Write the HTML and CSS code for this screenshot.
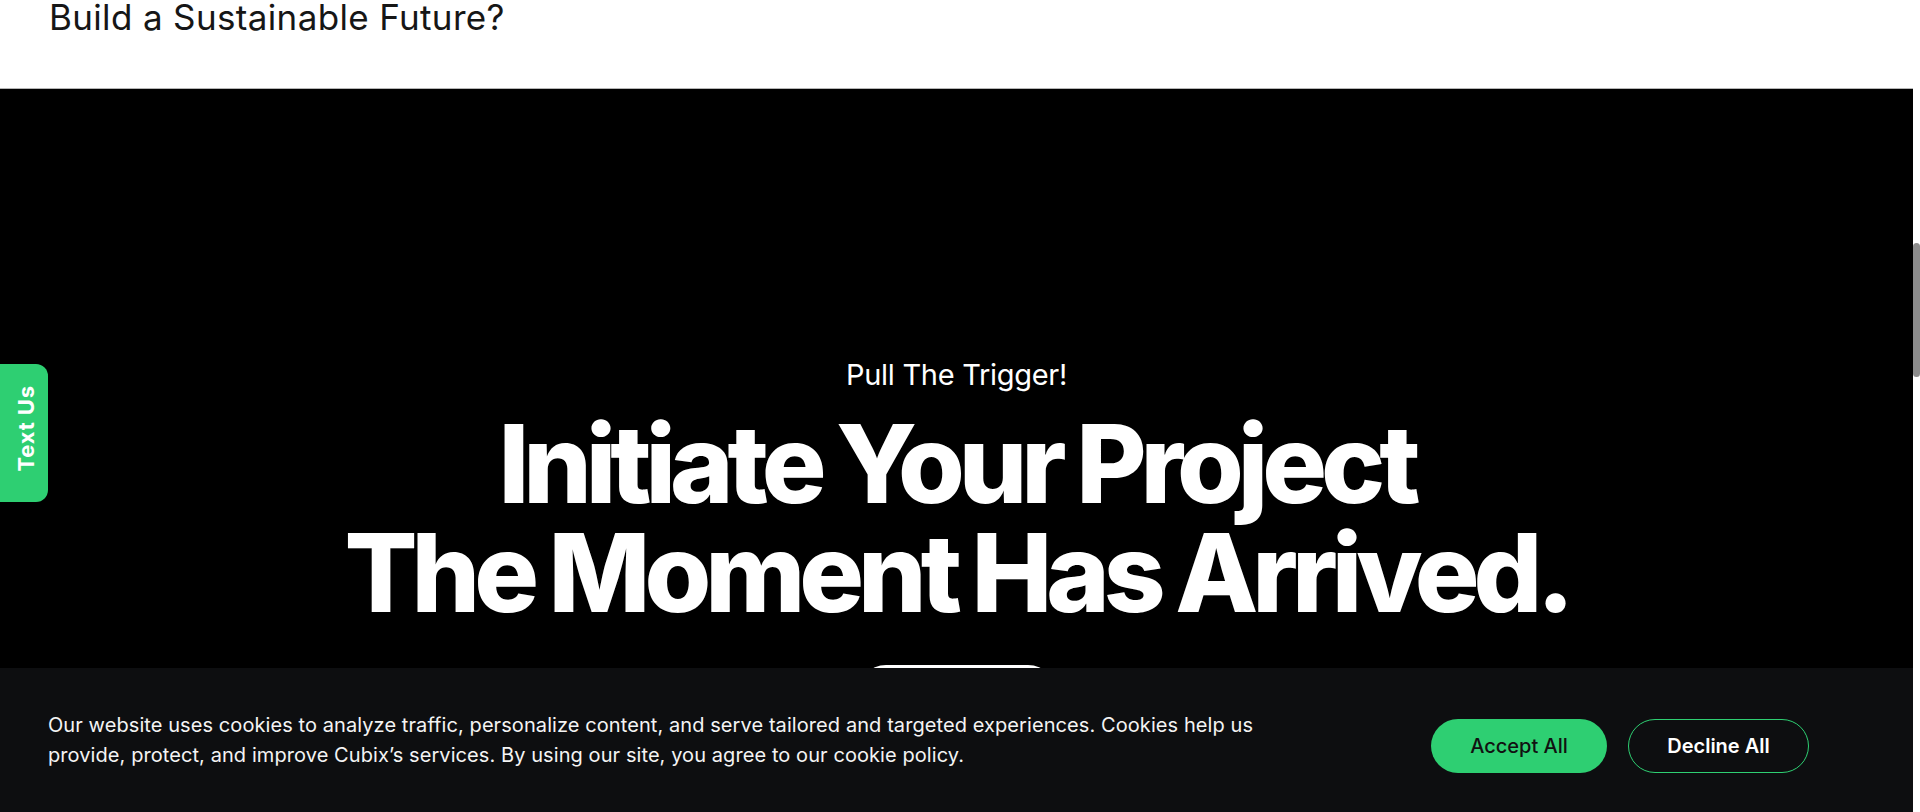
FILE: index.html
```html
<!DOCTYPE html>
<html lang="en">
<head>
<meta charset="utf-8">
<title>Initiate Your Project</title>
<link rel="stylesheet" href="styles.css">
</head>
<body>
<div class="page">
  <section class="intro">
    <h2 class="intro-title">Build a Sustainable Future?</h2>
  </section>
  <section class="cta">
    <p class="cta-eyebrow">Pull The Trigger!</p>
    <h1 class="cta-title">Initiate Your Project<br>The Moment Has Arrived.</h1>
    <a class="cta-button" href="#">Let's Talk</a>
  </section>
</div>

<a class="text-us" href="#"><span class="text-us-label">Text Us</span></a>

<div class="cookie-bar">
  <p class="cookie-text">Our website uses cookies to analyze traffic, personalize content, and serve tailored and targeted experiences. Cookies help us provide, protect, and improve Cubix’s services. By using our site, you agree to our cookie policy.</p>
  <div class="cookie-actions">
    <button class="btn btn-accept">Accept All</button>
    <button class="btn btn-decline">Decline All</button>
  </div>
</div>

<div class="scroll-thumb"></div>
</body>
</html>
```

FILE: styles.css
```css
* { box-sizing: border-box; }

html, body {
  margin: 0;
  padding: 0;
  height: 100%;
  overflow: hidden;
  background: #ffffff;
}

body {
  font-family: Inter, "Noto Sans", "Liberation Sans", sans-serif;
}

.page {
  margin-right: 7px;
}

.intro {
  height: 88px;
  padding-left: 49px;
}

.intro-title {
  margin: 0;
  font-size: 35px;
  line-height: 34px;
  font-weight: 400;
  letter-spacing: 0.01em;
  color: #161616;
}

.cta {
  background: #000000;
  border-top: 1px solid #b5b5b5;
  height: 1200px;
  padding-top: 268px;
  display: flex;
  flex-direction: column;
  align-items: center;
  text-align: center;
}

.cta-eyebrow {
  margin: 0;
  font-size: 29px;
  line-height: 36px;
  font-weight: 400;
  letter-spacing: -0.01em;
  color: #ffffff;
}

.cta-title {
  margin: 16px 0 0;
  font-size: 108px;
  line-height: 109px;
  font-weight: 800;
  letter-spacing: -0.056em;
  word-spacing: -2px;
  color: #ffffff;
}

.cta-button {
  margin-top: 38px;
  width: 200px;
  height: 58px;
  border-radius: 29px;
  background: #ffffff;
  color: #000000;
  display: flex;
  align-items: center;
  justify-content: center;
  font-size: 20px;
  font-weight: 600;
  text-decoration: none;
}

.text-us {
  position: fixed;
  left: 0;
  top: 364px;
  width: 48px;
  height: 138px;
  background: #2ecf72;
  border-radius: 0 12px 12px 0;
  display: flex;
  align-items: center;
  justify-content: center;
  text-decoration: none;
}

.text-us-label {
  writing-mode: vertical-rl;
  transform: rotate(180deg);
  color: #ffffff;
  font-size: 22px;
  font-weight: 700;
  letter-spacing: 0.04em;
  margin-bottom: 10px;
  margin-left: 4px;
}

.cookie-bar {
  position: fixed;
  left: 0;
  right: 7px;
  bottom: 0;
  height: 144px;
  background: #0d0e10;
  display: flex;
  align-items: center;
  justify-content: space-between;
  padding: 0 104px 0 48px;
}

.cookie-text {
  margin: 0;
  width: 1222px;
  font-size: 20px;
  line-height: 30px;
  font-weight: 400;
  letter-spacing: 0.004em;
  color: #f4f4f4;
}

.cookie-actions {
  display: flex;
  gap: 21px;
  margin-top: 12px;
}

.btn {
  height: 54px;
  border-radius: 27px;
  font-family: inherit;
  font-size: 20px;
  cursor: pointer;
  padding: 0;
}

.btn-accept {
  width: 176px;
  background: #2ecf72;
  border: none;
  color: #111111;
  font-weight: 500;
}

.btn-decline {
  width: 181px;
  background: transparent;
  border: 1px solid #2ecf72;
  color: #ffffff;
  font-weight: 600;
}

.scroll-thumb {
  position: fixed;
  right: 0;
  top: 243px;
  width: 7px;
  height: 134px;
  border-radius: 4px;
  background: #8c8c8c;
}
```
